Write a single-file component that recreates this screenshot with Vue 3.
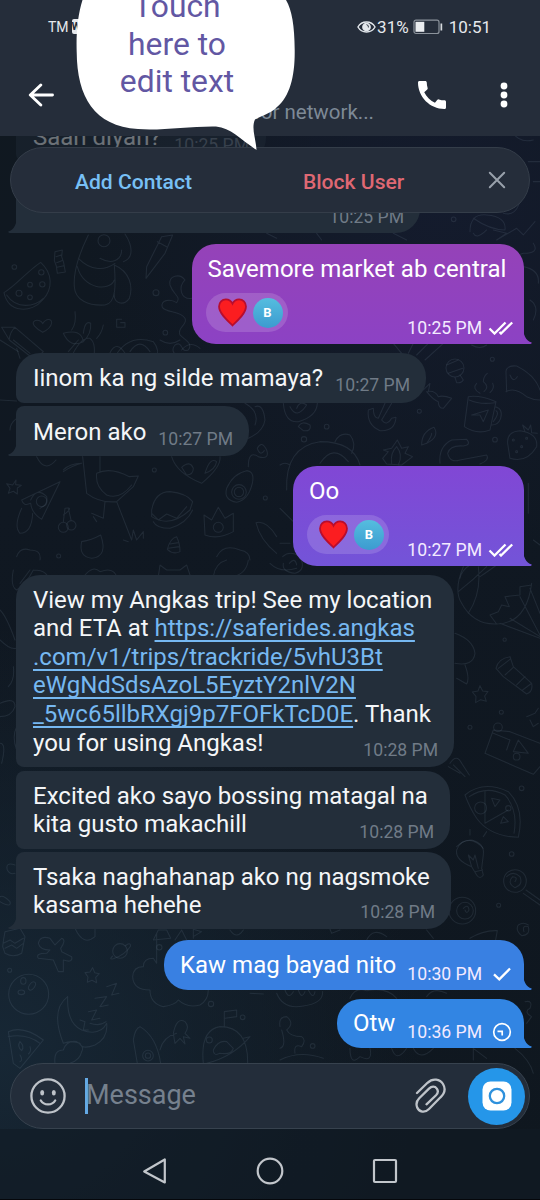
<script setup>
const messages = [
  { id: 'm1', side: 'in', lines: ['Saan diyan?'], time: '10:25 PM' },
  { id: 'm2', side: 'in', tail: true, lines: [], time: '10:25 PM' },
  { id: 'm3', side: 'out', tail: true, lines: ['Savemore market ab central'], time: '10:25 PM', reaction: true, status: 'read' },
  { id: 'm4', side: 'in', lines: ['Iinom ka ng silde mamaya?'], time: '10:27 PM' },
  { id: 'm5', side: 'in', tail: true, lines: ['Meron ako'], time: '10:27 PM' },
  { id: 'm6', side: 'out', tail: true, lines: ['Oo'], time: '10:27 PM', reaction: true, status: 'read' },
  { id: 'm7', side: 'in', trip: true, lines: [], time: '10:28 PM' },
  { id: 'm8', side: 'in', lines: ['Excited ako sayo bossing matagal na', 'kita gusto makachill'], time: '10:28 PM' },
  { id: 'm9', side: 'in', tail: true, lines: ['Tsaka naghahanap ako ng nagsmoke', 'kasama hehehe'], time: '10:28 PM' },
  { id: 'm10', side: 'out', tail: true, lines: ['Kaw mag bayad nito'], time: '10:30 PM', status: 'sent' },
  { id: 'm11', side: 'out', tail: true, lines: ['Otw'], time: '10:36 PM', status: 'pending' },
]
</script>

<template>
  <div class="phone">
    <svg class="wallpaper" viewBox="0 0 540 1200" width="540" height="1200">
      <g class="doodle">
        <g transform="translate(0 210) scale(.3333)">
          <path d="M12 248C50 225 80 185 122 157C158 190 160 235 128 270C95 310 25 310 12 248ZM20 255C50 300 105 290 130 265" />
          <circle cx="124" cy="187" r="8" /><circle cx="90" cy="224" r="7" /><circle cx="127" cy="223" r="8" /><circle cx="57" cy="250" r="9" /><circle cx="90" cy="262" r="7" />
          <path d="M128 367C108 355 94 342 102 334C110 327 125 332 128 341C138 325 156 325 155 339C153 352 140 361 128 367" />
          <path d="M165 125l22 -5l-2 20l6 18l5 28l-24 4l-3-22l-6-16zM168 140l18-6M170 158l19-7M171 172l20-5" />
          <path d="M265 75C238 130 220 190 223 230C225 270 265 288 315 285C350 280 347 220 343 165M235 145C270 180 310 185 345 160M232 170C250 240 330 245 343 210M343 165C390 185 400 230 388 265C370 290 340 280 343 250M300 145C335 165 365 150 365 120M375 72C400 110 400 145 370 155" />
          <circle cx="312" cy="92" r="18" /><path d="M440 170L485 80L518 75L495 130L438 205ZM472 95l28 15" />
          <path d="M577 265C540 270 535 230 555 210C540 190 505 195 510 225C520 255 545 260 530 278C510 265 480 270 487 292C500 310 540 300 555 325C565 345 530 350 540 375C555 390 580 400 565 420C540 430 550 390 525 405C505 430 540 440 545 450" />
          <circle cx="468" cy="248" r="9" /><circle cx="43" cy="171" r="7" /><circle cx="496" cy="368" r="7" />
          <path d="M5 352L45 352L130 425L105 450L28 390ZM28 388Q30 365 45 352M60 445L50 415M365 328H350V352H375V338H362M225 305Q230 340 215 360M310 345Q305 370 290 385" />
          <path d="M190 370Q245 355 250 395Q210 415 190 370M250 370Q255 330 272 340Q275 370 250 395M210 450Q240 380 270 385Q290 400 280 450M345 440Q385 370 460 395Q480 420 470 450M390 425Q420 380 450 425" />
        </g>
        <g transform="translate(0 340) scale(.3333)">
          <path d="M0 0L55 35M40 0L90 40M205 35L235 0M330 38Q350 0 375 40M480 0Q510 20 540 0M545 30Q570 0 600 25" />
          <path d="M65 480L180 425L125 538Q95 520 92 490Q70 500 65 480M92 480Q110 440 140 470Q145 495 120 505M65 505Q40 560 60 580Q95 580 98 520" />
          <circle cx="125" cy="484" r="16" /><path d="M48 420l-10 15l-18-4l10 14l-5 15l15-6l12 8v-18l12-8l-17-2z" />
          <path d="M248 350L260 460Q300 490 350 485L400 440L415 408L388 410Q330 380 290 400Q285 440 320 465Q360 480 395 435M300 350V395M190 390Q210 370 245 370Q220 375 190 395M315 485L310 535L275 520M290 545L280 530M350 485L395 600M370 600L385 605M395 600L400 570L410 600L430 575V595" />
          <path d="M455 510Q465 455 510 455Q560 460 578 485L570 510Q510 565 455 530ZM455 520L475 540L500 522L530 535L560 500M460 545Q470 565 510 565Q560 550 578 510" />
          <path d="M515 350Q530 400 605 430Q665 380 660 350M545 382Q570 360 580 385Q580 405 560 405ZM615 400Q630 350 650 365Q645 390 615 400" />
          <path d="M680 445Q700 400 740 392Q765 395 757 430Q745 480 710 487Q670 480 680 445" /><circle cx="717" cy="456" r="22" /><circle cx="717" cy="456" r="14" />
          <path d="M615 585L612 525L635 540L655 502L675 535L700 520L700 575Q655 600 615 585" /><circle cx="655" cy="562" r="15" />
          <path d="M245 605Q275 600 302 585Q325 650 275 655Q235 650 245 605M502 628Q510 595 530 590Q540 610 540 635Q520 645 502 628M510 612L535 608M505 625L538 620" />
          <circle cx="190" cy="562" r="15" /><circle cx="214" cy="556" r="14" /><path d="M190 545L195 505Q225 500 190 525M205 505L213 540M768 548Q800 540 830 590M768 548Q780 600 830 640M775 350Q745 330 745 380M775 350Q810 360 800 330Q785 300 772 325Q780 350 793 332M50 650Q60 620 90 630Q125 630 120 660M650 650Q670 610 720 630Q750 635 750 660" />
          <path d="M765 200Q790 190 795 240Q790 275 745 295M735 190Q780 215 765 255M110 350Q135 400 168 360M30 270Q30 250 50 235M0 180L50 183" />
          <circle cx="463" cy="390" r="6" /><circle cx="796" cy="474" r="6" /><circle cx="176" cy="648" r="6" />
        </g>
        <g transform="translate(280 340) scale(.3333)">
          <circle cx="525" cy="84" r="27" /><path d="M500 75L535 60M505 100L548 85M525 112L530 128Q545 130 550 120L540 105M340 10L365 40M410 45L445 10M435 60L490 10M385 40L400 10M575 15Q600 30 620 15" />
          <path d="M680 155L678 95Q680 75 710 78Q765 105 780 150M678 155Q705 140 740 170Q760 180 780 180M690 105Q700 130 712 110" />
          <path d="M565 170L553 260Q590 285 630 270L648 185Q600 165 565 170ZM568 180Q600 195 645 188M645 200Q670 205 662 235Q655 255 635 255M648 212Q660 220 640 245M575 225L625 210L610 245L600 225ZM600 160Q575 145 590 130M612 155Q630 140 610 125Q610 110 622 100M630 158Q645 145 638 130" />
          <path d="M430 150L450 130L445 155M440 155Q460 180 475 185Q475 205 490 205L515 175Q490 165 475 170Q465 150 440 155M335 190L305 240Q320 260 335 235L348 232Q345 275 300 272Q260 255 265 210L280 205Q280 235 295 235L315 190" />
          <path d="M425 315Q425 275 462 262Q480 290 440 310ZM440 310Q455 290 455 280M308 355L325 335L310 330L335 325L352 300L365 325L385 320L375 340L398 350L365 375L320 372ZM335 370Q330 340 350 320Q370 345 355 375M480 370Q475 320 515 300L560 298Q575 315 550 318Q510 315 503 340Q510 370 540 360L620 345Q630 360 600 372" />
          <path d="M683 310Q680 275 720 272Q775 280 770 320Q740 370 690 355ZM735 275L728 255L745 270L752 255L755 278L772 280" /><circle cx="700" cy="300" r="3" /><circle cx="725" cy="320" r="3" /><circle cx="740" cy="295" r="3" /><circle cx="710" cy="335" r="3" />
          <path d="M20 450Q15 320 120 305Q220 305 240 375M0 375Q15 365 30 375M165 305Q180 275 210 285Q230 310 215 340M120 370Q160 310 205 365M10 190Q15 250 55 245Q110 230 112 190M30 200Q50 240 80 195Q60 180 50 205" />
          <circle cx="140" cy="260" r="7" /><circle cx="72" cy="298" r="8" /><circle cx="637" cy="58" r="6" /><circle cx="418" cy="214" r="6" /><circle cx="645" cy="299" r="7" /><path d="M55 260Q65 240 90 255Q95 275 70 272ZM0 505L40 545M0 610L30 610M760 600l20 15M745 430v90" />
          <path d="M8 650Q30 630 60 650Q80 690 45 700Q5 695 10 670M28 670Q45 650 50 675M540 715Q545 690 570 675M600 710Q630 690 650 675" />
        </g>
        <g transform="translate(270 560) scale(.3333)">
          <path d="M580 20Q550 90 575 130Q610 195 680 192Q770 190 785 70M595 160Q635 100 625 20M565 95Q610 60 650 20M680 192L660 165L685 155L695 135L718 140L705 110L750 105L750 80L785 75M690 190L810 235M720 175L810 230M750 110L810 225M780 85L810 160" />
          <path d="M555 220Q610 240 615 280Q610 320 555 310M560 355L590 372Q600 355 585 315M678 325Q685 295 720 290L730 320L785 370Q790 395 770 402L700 350ZM685 325L720 298M705 345L730 322M740 375L765 350M758 390L782 372" />
          <path d="M630 377l8 16l16 2l-10 13l5 16l-17-5l-15 9l1-19l-11-13l17-3zM770 470l25-10l10-15M780 480l10 20l15-10M645 580L670 510L720 515L810 550M645 580L790 643L810 620M670 520L720 540L710 570M745 540L775 580L730 575Z" />
          <circle cx="684" cy="502" r="13" /><circle cx="740" cy="590" r="10" /><path d="M585 705Q640 660 715 695Q765 745 745 832Q660 830 620 775Q600 745 585 705M598 710Q650 675 705 705Q745 750 732 820M645 695V790M645 790L715 750M665 715L675 740L690 720ZM700 770L715 785L692 790Z" />
          <circle cx="632" cy="744" r="18" /><circle cx="715" cy="745" r="8" /><circle cx="755" cy="685" r="7" /><circle cx="694" cy="457" r="6" /><circle cx="600" cy="502" r="6" /><circle cx="704" cy="239" r="5" /><path d="M540 610Q560 580 575 610L598 645M550 615L585 650M535 620L570 640M0 10Q30 40 80 25M560 860Q600 820 640 865M600 825V808M640 830L650 815" />
        </g>
        <g transform="translate(0 830) scale(.3333)">
          <circle cx="86" cy="493" r="60" /><ellipse cx="70" cy="453" rx="8" ry="10" /><ellipse cx="96" cy="468" rx="8" ry="14" transform="rotate(35 96 468)" /><ellipse cx="64" cy="487" rx="10" ry="7" />
          <path d="M8 350Q10 330 15 305L60 295L75 320L65 370Q40 385 15 370ZM10 340L30 330L45 340L70 325M15 355L35 345L50 355L70 340M150 360Q120 360 115 340Q120 315 150 325L165 345L185 325Q200 330 182 355L185 365L215 380Q220 400 190 390L190 425L175 425L160 390L115 385Q105 370 140 370Z" />
          <circle cx="360" cy="363" r="22" /><path d="M338 378Q325 390 340 386Q375 375 392 348Q392 335 375 348M278 413l6 15l14 3l-11 11l3 16l-14-7l-14 6l2-16l-9-13l15-2z" />
          <path d="M203 500Q200 580 245 600Q300 620 320 580Q325 625 285 645Q245 660 240 640Q215 630 190 640Q150 540 203 500M165 700Q160 660 190 660Q200 630 230 635Q255 650 245 665Q240 690 210 700M240 570L255 575L250 600L265 600M265 545L290 540L275 570L300 565M285 505L320 500L300 530L325 525M320 470L350 460L335 495L357 490M270 580Q300 590 318 575" />
          <path d="M25 605Q70 585 130 630L60 715L40 700ZM25 620Q80 610 120 640M60 635Q75 650 65 662Q50 650 60 635M90 650Q95 665 85 672M60 675Q70 690 60 695" />
          <path d="M490 530Q450 520 450 480Q400 480 398 440Q400 410 430 410Q430 385 460 385L470 400V310M490 530Q525 525 535 510Q560 535 600 525Q625 510 625 480M460 330L475 300L500 300L512 325ZM525 330L545 300L560 330M580 325V298L605 305L580 320" /><circle cx="478" cy="352" r="8" />
          <path d="M400 630Q405 595 420 590Q470 620 482 700M400 630L412 700M480 660Q490 620 530 610M520 610Q530 560 555 575Q570 590 555 610L570 625L550 620L555 642L540 625L525 640Z" /><circle cx="444" cy="677" r="16" /><circle cx="444" cy="677" r="8" />
          <path d="M610 700Q600 600 660 590Q745 590 743 700M673 590V545L710 540V560L675 565M640 660Q655 630 680 635L700 655Q695 675 660 670Q640 680 640 660M620 700Q700 680 750 620L730 625" /><circle cx="628" cy="630" r="9" /><circle cx="728" cy="562" r="7" /><circle cx="633" cy="522" r="8" />
          <path d="M225 295Q250 350 285 320V295M0 200Q10 195 30 215Q35 235 0 215M45 105Q15 95 22 120Q30 135 45 130M690 300Q710 330 730 300M750 490L790 492" /><circle cx="29" cy="421" r="6" />
        </g>
        <g transform="translate(270 840) scale(.3333)">
          <path d="M605 80Q555 60 560 30Q570 0 605 0Q645 10 640 45L635 85L640 105Q630 120 620 105ZM605 80L595 45L610 60L615 45L625 85M615 95L638 90" />
          <circle cx="735" cy="123" r="34" /><path d="M735 125Q745 110 728 110Q710 130 735 143Q760 135 750 110Q730 90 710 110M768 150L810 180M760 160L810 195" />
          <circle cx="577" cy="212" r="40" /><circle cx="585" cy="212" r="25" /><path d="M580 205Q595 190 597 210Q590 225 585 210M762 275Q755 255 775 260Q782 285 755 287Q735 270 745 255Q760 245 775 255M470 270L490 295M600 295Q640 270 682 272L675 310M290 300Q310 260 350 290M180 268L185 280L210 270" />
          <circle cx="725" cy="42" r="7" /><circle cx="686" cy="196" r="6" /><path d="M20 460Q40 510 100 498Q160 490 158 455M45 450Q55 480 70 455M85 450Q95 480 105 455M115 450Q130 480 135 455M240 475Q255 440 290 452Q350 440 380 475M470 470Q490 440 530 460" />
          <path d="M30 560Q25 530 50 530Q75 550 50 570Q60 590 95 590Q110 600 95 620Q70 610 75 640M35 570Q50 620 30 625M30 660Q90 630 160 655M240 625Q240 680 270 650Q310 670 300 625M365 625Q380 670 410 625M430 625Q450 665 490 625M610 625V660M610 625L650 655M735 625Q780 660 790 700M765 485Q790 480 780 505Q760 515 785 530L770 550" /><circle cx="128" cy="618" r="7" />
        </g>
        <g transform="translate(240 0) scale(.3333)">
          <path d="M690 695Q690 640 740 645Q800 650 795 690Q750 690 700 655M700 700Q710 720 740 690M760 690L800 700L770 720L830 685L850 705L885 665M790 640Q830 650 840 600M865 485H900M880 545H900M230 700L245 720M80 700L110 715M460 700L500 720" /><circle cx="641" cy="658" r="7" /><path d="M790 740Q800 780 850 760Q900 760 880 730M850 800Q900 810 895 850M870 900Q900 920 880 960M820 400Q840 430 880 420" />
        </g>
        <g transform="translate(0 570) scale(.3333)">
          <path d="M40 0Q30 50 50 60Q80 40 100 0M60 40L90 0M100 0Q150 0 145 40M0 120Q20 140 45 210M0 210Q30 240 48 235M40 290Q45 330 25 350M0 400Q45 380 45 410Q35 440 0 440M50 470Q35 500 50 540M0 520Q20 520 5 580M255 15Q280 -15 300 5Q340 -10 350 20M475 20L480 -15L500 0H540L560 -15L570 15M640 20Q645 -20 680 -30M700 20Q740 10 745 -30" />
        </g>
      </g>
    </svg>

    <header class="top">
      <div class="status">
        <span class="tm">TM</span><span class="wifi">W</span>
        <div class="status-right">
          <svg class="eye" viewBox="0 0 20 16" width="19" height="16">
            <path d="M1 8C5 1 15 1 19 8C15 15 5 15 1 8Z" fill="none" stroke="#e3e7ec" stroke-width="1.5" />
            <circle cx="10" cy="8" r="4.6" fill="#e3e7ec" /><path d="M10 5.5a2.5 2.5 0 0 1 2 3" fill="none" stroke="#252d3a" />
          </svg>
          <span class="pct">31%</span>
          <svg class="battery" viewBox="0 0 30 16" width="30" height="16">
            <rect x="1" y="1.2" width="25" height="13.3" rx="2" fill="none" stroke="#8c939c" stroke-width="1.2" />
            <rect x="2.5" y="2.8" width="8.8" height="10" fill="#e9ecef" /><rect x="27.5" y="4.5" width="1.7" height="7" fill="#d6d9dd" />
          </svg>
          <span class="clock">10:51</span>
        </div>
      </div>
      <div class="bar">
        <svg class="back" viewBox="0 0 26 24" width="26" height="24"><path d="M12.8 2L2.3 12L12.8 22M2.8 12H24.5" fill="none" stroke="#fff" stroke-width="2.9" stroke-linecap="round" stroke-linejoin="round" /></svg>
        <span class="network">Waiting for network...</span>
        <svg class="call" viewBox="3 3 18 18" width="28" height="28"><path fill="#fff" d="M20.01 15.38c-1.23 0-2.42-.2-3.53-.56a.977.977 0 0 0-1.01.24l-1.57 1.97c-2.83-1.35-5.48-3.9-6.89-6.83l1.95-1.66c.27-.28.35-.67.24-1.02-.37-1.11-.56-2.3-.56-3.53 0-.54-.45-.99-.99-.99H4.19C3.65 3 3 3.24 3 3.99 3 13.28 10.73 21 20.01 21c.71 0 .99-.63.99-1.18v-3.45c0-.54-.45-.99-.99-.99z" /></svg>
        <svg class="dots" viewBox="0 0 8 26" width="8" height="26"><g fill="#fff"><circle cx="4" cy="4" r="3.4" /><circle cx="4" cy="13" r="3.4" /><circle cx="4" cy="22" r="3.4" /></g></svg>
      </div>
    </header>

    <main class="chat">
      <div v-for="m in messages" :key="m.id" class="bubble" :class="[m.side, m.id, { tailed: m.tail }]">
        <div class="text">
          <template v-if="m.trip">
            View my Angkas trip! See my location<br />and ETA at <a>https://saferides.angkas</a><br /><a>.com/v1/trips/trackride/5vhU3Bt</a><br /><a>eWgNdSdsAzoL5EyztY2nlV2N</a><br /><a>_5wc65llbRXgj9p7FOFkTcD0E</a>. Thank<br />you for using Angkas!
          </template>
          <div v-for="line in m.lines" :key="line">{{ line }}</div>
        </div>
        <div v-if="m.reaction" class="reaction">
          <svg viewBox="0 0 28 28" width="29" height="29"><path d="M14 26.5C8 21 1 14.5 1 8.3C1 4 4 1.3 7.6 1.3C10.5 1.3 12.8 3 14 5.5C15.2 3 17.5 1.3 20.4 1.3C24 1.3 27 4 27 8.3C27 14.5 20 21 14 26.5Z" fill="#fb1d20" stroke="#b80d2e" stroke-width="1.7" /></svg>
          <span class="avatar">B</span>
        </div>
        <div class="meta">
          <span>{{ m.time }}</span>
          <svg v-if="m.status === 'read'" class="read" viewBox="0 0 26 14" width="26" height="14"><path d="M1.5 7.5L6.5 12.5L17.5 1.5M11.5 11L13 12.5L24.2 1.5" /></svg>
          <svg v-if="m.status === 'sent'" class="single" viewBox="0 0 20 20" width="20" height="20"><path d="M2 10.3L7.3 15.3L18 4.5" /></svg>
          <svg v-if="m.status === 'pending'" class="single thin" viewBox="0 0 20 20" width="20" height="20"><circle cx="10" cy="10" r="8.3" /><path d="M5.5 9.3H10.2V13.5" /></svg>
        </div>
        <svg v-if="m.tail" class="tail" viewBox="0 0 10 18" width="10" height="18"><path d="M0 0C0 9 3 15 8.700 16.600Q8.900 18 7.500 18H0Z" /></svg>
      </div>
    </main>

    <div class="actions">
      <span class="add">Add Contact</span>
      <span class="block">Block User</span>
      <svg class="close" viewBox="0 0 18 18" width="18" height="18"><path d="M1.800 1.800L16.200 16.200M16.200 1.800L1.800 16.200" stroke="#99a1ab" stroke-width="2" stroke-linecap="round" /></svg>
    </div>

    <div class="composer">
      <svg class="smile" viewBox="0 0 38 38" width="38" height="38"><g fill="none" stroke="#bec3c9" stroke-width="2.300" stroke-linecap="round"><circle cx="19" cy="19" r="16.600" /><path d="M11.800 23.500C15 28.700 23 28.700 26.200 23.500" /></g><ellipse cx="13.200" cy="15.800" rx="2" ry="2.700" fill="#bec3c9" /><ellipse cx="24.800" cy="15.800" rx="2" ry="2.700" fill="#bec3c9" /></svg>
      <span class="caret"></span><span class="placeholder">Message</span>
      <svg class="clip" viewBox="0 0 32 36" width="32" height="36"><path d="M2 15L12.500 4.800C18 -.3 25 1.200 28 6C31 11 29 16 25.500 19.300L14 31C9.800 35.300 4 34 2.200 29.500C.8 26 1.700 22.800 4.200 20.300L14 10.600C16.700 8 20 8.200 21.800 10.600C23.500 13 22.800 15.500 21 17.300L11.500 26.300" fill="none" stroke="#bec3c9" stroke-width="2.300" stroke-linecap="round" /></svg>
      <div class="camera"><svg viewBox="0 0 30 30" width="30" height="30"><rect x=".5" y=".5" width="29" height="29" rx="8" fill="#fff" /><circle cx="15" cy="15" r="7.200" fill="#fff" stroke="#2f91dc" stroke-width="2.300" /></svg></div>
    </div>

    <nav class="nav">
      <svg viewBox="0 0 26 28" width="26" height="28"><path d="M22.800 2.500V25.500L2.200 14.500Z" /></svg>
      <svg viewBox="0 0 28 28" width="28" height="28"><circle cx="14" cy="14" r="12.300" /></svg>
      <svg viewBox="0 0 26 26" width="26" height="26"><rect x="2" y="2" width="22" height="22" rx="1" /></svg>
    </nav>

    <div class="callout">
      <svg viewBox="0 0 300 152" width="300" height="152"><path fill="#fff" d="M82.500 0C78 14 76 32 76.700 52C77 97 94 126 138 129C160 131 190 126 216 126.500C231 128 240 139 256.500 150C256 139 251 128 255 119.500C261 116 270 114 277 107C290 96 295 76 294.700 50C294.500 26 292 10 286 0Z" /></svg>
      <p class="callout-text">Touch<br />here to<br />edit text</p>
    </div>
  </div>
</template>

<style>
html, body { margin: 0; background: #0f151e; }
</style>

<style scoped>
.phone {
  position: relative;
  display: flex;
  flex-direction: column;
  width: 540px;
  height: 1200px;
  overflow: hidden;
  font-family: Roboto, "Liberation Sans", sans-serif;
  background:
    radial-gradient(circle at 0 1050px, #172735 0, rgba(23, 39, 53, 0) 420px),
    radial-gradient(circle at 440px 200px, #141b2d 0, rgba(20, 27, 45, 0) 360px),
    linear-gradient(180deg, #101820 0, #101822 500px, #0f171f 1200px);
}
.wallpaper { position: absolute; inset: 0; }
.doodle { fill: none; stroke: #7d93a8; stroke-opacity: .15; stroke-width: 3.200; stroke-linecap: round; stroke-linejoin: round; }
.top { position: relative; z-index: 1; height: 136px; flex: none; background: #252d3a; }
.status { display: flex; align-items: center; height: 53px; padding: 0 49px 0 48px; color: #e6e9ed; font-size: 17px; }
.tm { font-size: 14px; }
.wifi { margin-left: 3px; width: 14px; height: 15px; border-radius: 2px; background: #e6e9ed; color: #252d3a; font-size: 11px; font-weight: 700; line-height: 15px; }
.status-right { display: flex; align-items: center; margin-left: auto; }
.pct { margin-left: 1px; }
.battery { margin: 0 6px 0 4px; }
.bar { display: flex; align-items: center; height: 83px; padding: 0 32px 0 28px; }
.network { margin: 34px auto 0 126px; color: #7d8996; font-size: 20.500px; white-space: nowrap; }
.call { margin-right: 54px; }
.chat { position: relative; display: flex; flex-direction: column; height: 918px; flex: none; }
.bubble {
  position: relative;
  display: grid;
  box-sizing: border-box;
  flex: none;
  padding: 10.700px 16px 6.800px 17px;
  background: #232e3a;
  color: #f4f6f8;
  font-size: 24px;
  line-height: 28.600px;
  white-space: nowrap;
}
.text, .meta, .reaction { grid-area: 1 / 1; }
.meta { display: flex; align-items: center; align-self: end; justify-self: end; height: 20px; color: #707b87; font-size: 17.600px; line-height: 20px; }
.in { align-self: flex-start; margin-left: 16px; border-radius: 8px 24px 24px 8px; }
.out { align-self: flex-end; margin-right: 16.500px; border-radius: 24px 24px 0 24px; color: #fff; padding-bottom: 5.800px; padding-right: 9.500px; padding-left: 16px; }
.out .meta { color: #f3eaff; }
.in.tailed { border-bottom-left-radius: 0; }
.meta svg { fill: none; stroke: #fff; stroke-width: 2.300; }
.meta .thin { stroke-width: 1.700; }
.read { margin-left: 6px; }
.single { margin: 0 2px 0 10px; }
.tail { position: absolute; bottom: 0; }
.out .tail { left: calc(100% - .500px); }
.in .tail { right: calc(100% - .500px); transform: scaleX(-1); }
.in .tail path { fill: #232e3a; }
.m1 { width: 250px; height: 50px; margin-top: -24px; opacity: .4; }
.m2 { width: 404px; height: 67px; margin-top: 4px; margin-bottom: 11px; color: #7a8591; }
.m1 .meta { margin-right: 1px; }
.m2 .meta { margin-bottom: -1px; }
.m3 { width: 332px; height: 100px; background: linear-gradient(#9542b8, #8c42c4); }
.m3 .tail path { fill: #8c42c4; }
.m4 { width: 410px; height: 50px; margin-top: 9px; border-top-left-radius: 24px; padding-bottom: 8px; }
.m5 { width: 233px; height: 50px; margin-top: 2.500px; padding-top: 12px; padding-bottom: 6.500px; }
.m6 { width: 230.500px; height: 100px; margin-top: 10.500px; background: linear-gradient(#8147d5, #7354d8); }
.m6 .tail path { fill: #7354d8; }
.m7 { width: 438px; height: 192px; margin-top: 9px; border-top-left-radius: 24px; }
.m8 { width: 434px; height: 77.500px; margin-top: 4px; }
.m9 { width: 435px; height: 77px; margin-top: 3.500px; }
.m10 { width: 359.500px; height: 49.500px; margin-top: 11px; background: #3980e2; }
.m10 .tail path { fill: #3980e2; }
.m11 { width: 186.500px; height: 49.500px; margin-top: 9px; background: #3285e3; }
.m11 .tail path { fill: #3285e3; }
a { color: #76b8f1; text-decoration: underline; text-decoration-thickness: 1.500px; text-underline-offset: 4px; text-decoration-skip-ink: none; }
.reaction { display: flex; align-items: center; align-self: end; justify-self: start; box-sizing: border-box; width: 82px; height: 39px; margin: 0 0 6.200px -2px; padding: 0 5px 0 12px; border-radius: 20px; background: rgba(255, 255, 255, .15); }
.avatar { width: 30px; height: 30px; margin-left: 6px; flex: none; border-radius: 50%; background: linear-gradient(#55bddf, #3c9bd0); font-size: 13px; font-weight: 700; line-height: 30px; text-align: center; }
.actions { position: absolute; left: 10px; top: 147px; display: flex; align-items: center; box-sizing: border-box; width: 520px; height: 66px; padding: 2px 23px 0 64px; border: 1px solid #343d49; border-radius: 33px; background: #252d3a; font-size: 21.100px; font-weight: 500; }
.add { color: #78c0f5; }
.block { margin-left: 111px; color: #df6873; }
.close { margin-left: auto; margin-top: -2px; }
.composer { position: relative; display: flex; align-items: center; box-sizing: border-box; flex: none; width: 520px; height: 66px; margin: 9px 0 0 10px; padding: 0 4px 0 18px; border: 1px solid #37424e; border-radius: 33px; background: #232d3a; }
.caret { width: 3px; height: 36px; margin-left: 18px; background: #64a9e4; }
.placeholder { margin: -2px 0 0 -2px; color: #76818e; font-size: 27px; }
.clip { margin-left: auto; }
.camera { display: grid; place-items: center; width: 57px; height: 57px; margin-left: 21px; border-radius: 50%; background: #2596e9; }
.nav { position: relative; display: flex; align-items: center; justify-content: center; gap: 88px; flex: 1; padding-top: 13px; border-bottom: 1px solid #05070b; background: rgba(17, 26, 36, .6); }
.nav svg { fill: none; stroke: #c2c6cb; stroke-width: 2.200; stroke-linejoin: round; }
.callout { position: absolute; z-index: 2; left: 0; top: 0; width: 300px; height: 152px; }
.callout-text { position: absolute; left: 76px; top: -12px; width: 202px; margin: 0; color: #6257a3; font-size: 31.800px; line-height: 37.700px; text-align: center; }
</style>
